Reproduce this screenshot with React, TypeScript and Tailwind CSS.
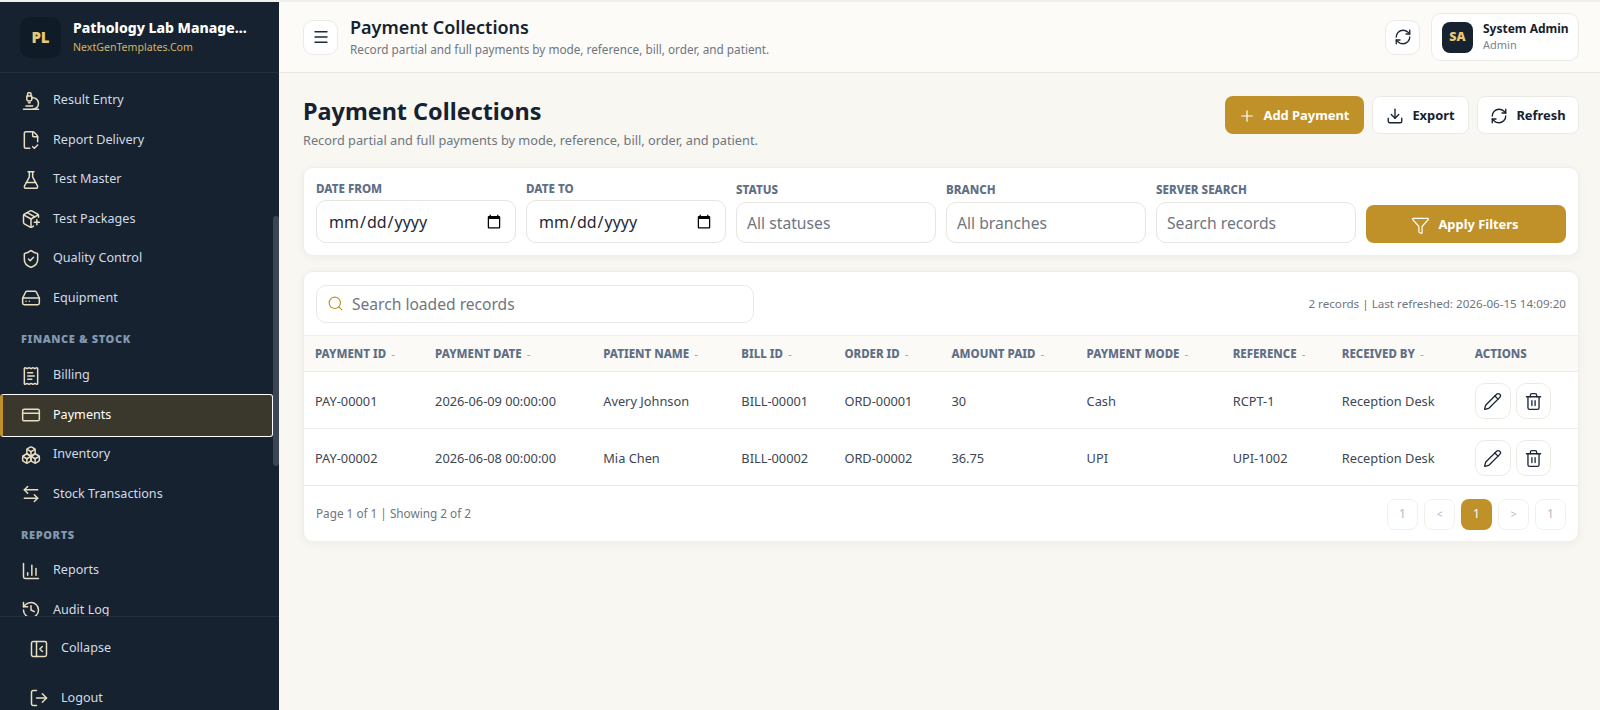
import React from "react";
import {
  Microscope, FileCheckCorner, FlaskConical, PackagePlus, ShieldCheck, HardDrive, ReceiptText, CreditCard, Boxes,
  ArrowLeftRight, ChartColumn, History, PanelLeftClose, LogOut, Menu, RefreshCw, Plus, Download, Funnel, Search, Pencil, Trash2,
} from "lucide-react";

const font = { fontFamily: '"Noto Sans", sans-serif' };

function NavItem({ icon: Icon, label, active }: { icon: any; label: string; active?: boolean }) {
  return (
    <div className={active
      ? "flex h-[43px] -my-[1.75px] items-center gap-[12px] pl-[18px] bg-[#3a382c] border border-white rounded-[3px] border-l-[3px] border-l-[#c09128] text-white text-[12.6px] relative"
      : "flex h-[39.5px] items-center gap-[12px] pl-[21px] text-[#d3dbe6] text-[12.6px]"}>
      <Icon size={20} strokeWidth={1.8} className="text-[#e9dfc0] shrink-0" />
      <span>{label}</span>
    </div>
  );
}

function FilterField({ label, placeholder }: { label: string; placeholder: string }) {
  return (
    <div className="flex flex-col w-[200px]">
      <label className="text-[11.6px] font-extrabold leading-[15px] mb-[5px] text-[#5f6f86]">{label}</label>
      <input placeholder={placeholder} className="h-[41px] w-full rounded-[10px] border border-[#e6e6e1] bg-white px-[10px] text-[15.7px] outline-none placeholder:text-[#6f7681]" />
    </div>
  );
}

function DateField({ label }: { label: string }) {
  return (
    <div className="flex flex-col w-[200px]">
      <label className="text-[11.6px] font-extrabold leading-[15px] mb-[4px] text-[#5f6f86]">{label}</label>
      <input type="date" className="h-[43px] w-full rounded-[10px] border border-[#e6e6e1] bg-white px-[11px] text-[16px] text-[#1f2937] outline-none" />
    </div>
  );
}

const headers: [string, string][] = [
  ["PAYMENT ID", "w-[120px]"], ["PAYMENT DATE", "w-[168px]"], ["PATIENT NAME", "w-[138px]"], ["BILL ID", "w-[103px]"],
  ["ORDER ID", "w-[107px]"], ["AMOUNT PAID", "w-[135px]"], ["PAYMENT MODE", "w-[146px]"], ["REFERENCE", "w-[109px]"],
  ["RECEIVED BY", "w-[133px]"], ["ACTIONS", "w-[114px]"],
];

const rows = [
  ["PAY-00001", "2026-06-09 00:00:00", "Avery Johnson", "BILL-00001", "ORD-00001", "30", "Cash", "RCPT-1", "Reception Desk"],
  ["PAY-00002", "2026-06-08 00:00:00", "Mia Chen", "BILL-00002", "ORD-00002", "36.75", "UPI", "UPI-1002", "Reception Desk"],
];

function PageBtn({ children, active, small }: { children: React.ReactNode; active?: boolean; small?: boolean }) {
  return (
    <div className={active
      ? "w-[31px] h-[31px] rounded-[8px] bg-[#c09128] text-white flex items-center justify-center text-[12px]"
      : small
        ? "w-[31px] h-[31px] rounded-[8px] border border-[#f1f1ec] bg-white text-[#b5b8bd] flex items-center justify-center text-[10px]"
        : "w-[31px] h-[31px] rounded-[8px] border border-[#f1f1ec] bg-white text-[#b5b8bd] flex items-center justify-center text-[12px]"}>
      {children}
    </div>
  );
}

export default function App() {
  return (
    <div style={font} className="h-[710px] w-[1600px] overflow-hidden flex bg-[#f8f7f2] border-t-2 border-t-[#f0f0ee]">
      <aside className="w-[279px] h-full shrink-0 bg-[#16222f] flex flex-col relative">
        <div className="h-[71px] shrink-0 flex items-center pl-[20px] gap-[12px] border-b border-[#243140]">
          <div className="w-[41px] h-[41px] rounded-[10px] bg-[#101b28] flex items-center justify-center text-[15px] font-black text-[#e6c877]">PL</div>
          <div className="flex flex-col min-w-0">
            <div className="text-[14px] font-extrabold text-white leading-[21px] whitespace-nowrap">Pathology Lab Manage...</div>
            <div className="text-[10.6px] text-[#d2b565] leading-[19px]">NextGenTemplates.Com</div>
          </div>
        </div>
        <nav className="flex-1 min-h-0 overflow-hidden pt-[8px] pr-[6px]">
          <NavItem icon={Microscope} label="Result Entry" />
          <NavItem icon={FileCheckCorner} label="Report Delivery" />
          <NavItem icon={FlaskConical} label="Test Master" />
          <NavItem icon={PackagePlus} label="Test Packages" />
          <NavItem icon={ShieldCheck} label="Quality Control" />
          <NavItem icon={HardDrive} label="Equipment" />
          <div className="h-[38px] pl-[21px] pt-[13px] text-[11px] font-black tracking-[0.6px] leading-[16px] text-[#8497b0]">FINANCE &amp; STOCK</div>
          <NavItem icon={ReceiptText} label="Billing" />
          <NavItem icon={CreditCard} label="Payments" active />
          <NavItem icon={Boxes} label="Inventory" />
          <NavItem icon={ArrowLeftRight} label="Stock Transactions" />
          <div className="h-[37px] pl-[21px] pt-[13px] text-[11px] font-black tracking-[0.6px] leading-[16px] text-[#8497b0]">REPORTS</div>
          <NavItem icon={ChartColumn} label="Reports" />
          <NavItem icon={History} label="Audit Log" />
        </nav>
        <div className="absolute right-0 top-[214px] w-[6px] h-[250px] bg-[#3a4654] rounded-full" />
        <div className="h-[94px] shrink-0 border-t border-[#243140] bg-[#16222f] overflow-hidden">
          <div className="flex h-[63px] items-center gap-[12px] pl-[29px] text-[12.6px] text-[#d3dbe6]">
            <PanelLeftClose size={20} strokeWidth={1.8} className="text-[#e9dfc0]" />
            <span>Collapse</span>
          </div>
          <div className="flex h-[36px] items-center gap-[12px] pl-[29px] text-[12.6px] text-[#d3dbe6]">
            <LogOut size={20} strokeWidth={1.8} className="text-[#e9dfc0]" />
            <span>Logout</span>
          </div>
        </div>
      </aside>

      <main className="flex-1 min-w-0 flex flex-col">
        <header className="h-[71px] shrink-0 bg-[#fcfbf8] border-b border-[#e8e7e1] flex items-center justify-between pl-[24px] pr-[21px]">
          <div className="flex items-center gap-[12px]">
            <button className="w-[35px] h-[35px] rounded-[10px] border border-[#ebebe6] bg-white flex items-center justify-center">
              <Menu size={18} className="text-[#1f2937]" strokeWidth={1.8} />
            </button>
            <div className="flex flex-col -mt-[1px]">
              <div className="text-[18px] font-semibold leading-[24px] text-[#16222f]">Payment Collections</div>
              <div className="text-[11.75px] leading-[20px] text-[#6f7681]">Record partial and full payments by mode, reference, bill, order, and patient.</div>
            </div>
          </div>
          <div className="flex items-center gap-[11px]">
            <button className="w-[35px] h-[35px] rounded-[10px] border border-[#ebebe6] bg-white flex items-center justify-center">
              <RefreshCw size={18} strokeWidth={1.8} className="text-[#1f2937]" />
            </button>
            <div className="w-[148px] h-[48px] rounded-[10px] border border-[#ebebe6] bg-white flex items-center pl-[10px] gap-[10px]">
              <div className="w-[31px] h-[31px] rounded-[8px] bg-[#16222f] flex items-center justify-center text-[12.5px] font-black text-[#e6c877]">SA</div>
              <div className="flex flex-col">
                <div className="text-[12px] font-bold leading-[16px] text-[#16222f] whitespace-nowrap">System Admin</div>
                <div className="text-[11px] leading-[16px] text-[#7b828c]">Admin</div>
              </div>
            </div>
          </div>
        </header>

        <div className="flex-1 min-h-0 pl-[24px] pr-[21px] pt-[22px]">
          <div className="flex items-start justify-between h-[72px]">
            <div className="-mt-[1px]">
              <h1 className="text-[23.4px] font-bold leading-[34px] text-[#16222f]">Payment Collections</h1>
              <p className="text-[12.75px] leading-[22px] text-[#6f7681] mt-[1px]">Record partial and full payments by mode, reference, bill, order, and patient.</p>
            </div>
            <div className="flex items-center gap-[8px] pt-[1px]">
              <button className="h-[38px] w-[139px] rounded-[8px] bg-[#c09128] text-white text-[12.9px] font-bold flex items-center justify-center gap-[8px] pt-[1px] pr-[2px]">
                <Plus size={18} strokeWidth={1.6} /> Add Payment
              </button>
              <button className="h-[38px] w-[97px] rounded-[8px] border border-[#ebebe6] bg-white text-[#16222f] text-[12.9px] font-bold flex items-center justify-center gap-[8px] pt-[1px]">
                <Download size={18} strokeWidth={1.8} /> Export
              </button>
              <button className="h-[38px] w-[102px] rounded-[8px] border border-[#ebebe6] bg-white text-[#16222f] text-[12.9px] font-bold flex items-center justify-center gap-[8px] pt-[1px]">
                <RefreshCw size={18} strokeWidth={1.8} /> Refresh
              </button>
            </div>
          </div>

          <section className="h-[89px] rounded-[10px] border border-[#efeee9] bg-white shadow-[0_2px_10px_rgba(30,30,20,0.05)] px-[12px] pb-[12px] flex items-end gap-[10px]">
            <DateField label="DATE FROM" />
            <DateField label="DATE TO" />
            <FilterField label="STATUS" placeholder="All statuses" />
            <FilterField label="BRANCH" placeholder="All branches" />
            <FilterField label="SERVER SEARCH" placeholder="Search records" />
            <button className="w-[200px] h-[38px] rounded-[8px] bg-[#c09128] text-white text-[12.9px] font-bold flex items-center justify-center gap-[8px] pt-[2px] pr-[2px]">
              <Funnel size={19} strokeWidth={1.5} /> Apply Filters
            </button>
          </section>

          <section className="mt-[15px] h-[271px] rounded-[10px] border border-[#efeee9] bg-white shadow-[0_2px_10px_rgba(30,30,20,0.05)] overflow-hidden">
            <div className="h-[63px] flex items-center justify-between px-[12px]">
              <div className="w-[438px] h-[38px] rounded-[10px] border border-[#e9e8e2] flex items-center pl-[10px] gap-[8px]">
                <Search size={17} strokeWidth={1.6} className="text-[#c09128] shrink-0" />
                <input placeholder="Search loaded records" className="flex-1 min-w-0 pt-[2px] text-[15.6px] outline-none placeholder:text-[#6f7681]" />
              </div>
              <div className="text-[11.65px] text-[#6f7681]">2 records | Last refreshed: 2026-06-15 14:09:20</div>
            </div>
            <table className="w-full table-fixed border-collapse">
              <thead>
                <tr className="h-[36px] bg-[#fbfaf6] border-y border-[#efeee9]">
                  {headers.map(([h, w]) => (
                    <th key={h} className={`${w} pl-[11px] text-left text-[11.5px] font-extrabold text-[#5f6f86] whitespace-nowrap`}>
                      {h}{h !== "ACTIONS" && <span className="font-normal text-[#9aa4b2] ml-[2px]"> -</span>}
                    </th>
                  ))}
                </tr>
              </thead>
              <tbody>
                {rows.map((r) => (
                  <tr key={r[0]} className="h-[57px] border-b border-[#efeee9]">
                    {r.map((c, i) => (
                      <td key={i} className="pl-[11px] pt-[3px] text-[12.8px] text-[#3d4652] whitespace-nowrap">{c}</td>
                    ))}
                    <td className="pl-[11px] pt-[2px]">
                      <div className="flex gap-[5px]">
                        <button className="w-[36px] h-[36px] rounded-[10px] border border-[#ebebe6] flex items-center justify-center">
                          <Pencil size={19} strokeWidth={1.7} className="text-[#1f2937]" />
                        </button>
                        <button className="w-[35px] h-[36px] rounded-[10px] border border-[#ebebe6] flex items-center justify-center">
                          <Trash2 size={19} strokeWidth={1.7} className="text-[#1f2937]" />
                        </button>
                      </div>
                    </td>
                  </tr>
                ))}
              </tbody>
            </table>
            <div className="h-[55px] flex items-center justify-between px-[12px] pt-[2px] border-t border-[#e9e8e2] -mt-[1px]">
              <div className="text-[11.75px] text-[#6f7681]">Page 1 of 1 | Showing 2 of 2</div>
              <div className="flex gap-[6px]">
                <PageBtn>1</PageBtn>
                <PageBtn small>&lt;</PageBtn>
                <PageBtn active>1</PageBtn>
                <PageBtn small>&gt;</PageBtn>
                <PageBtn>1</PageBtn>
              </div>
            </div>
          </section>
        </div>
      </main>
    </div>
  );
}
